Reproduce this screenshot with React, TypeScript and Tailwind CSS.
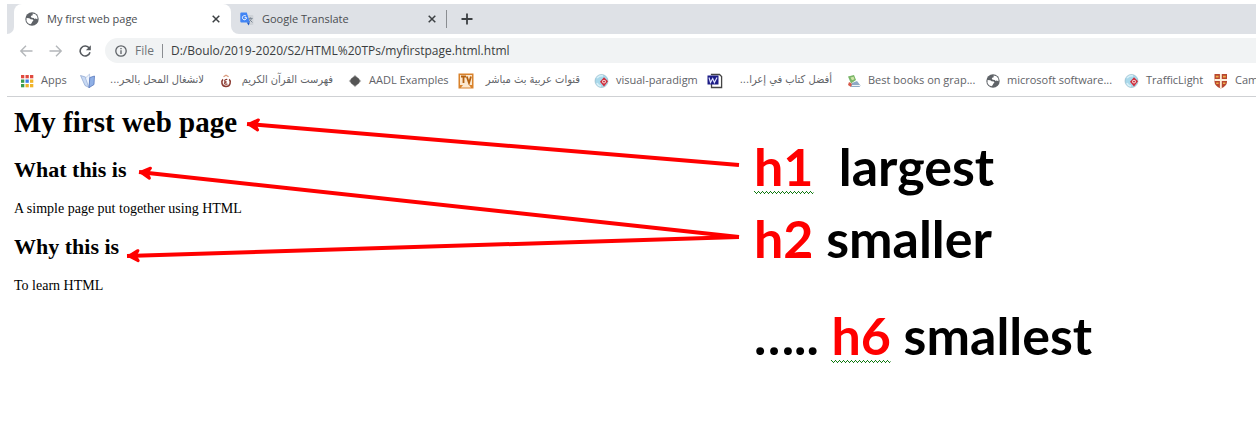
import type { ReactNode } from "react";

const GREY = "#5f6368";

interface Bookmark {
  label: string;
  icon: ReactNode;
  className: string;
  rtl?: boolean;
}

function GlobeIcon() {
  return (
    <svg viewBox="0 0 14 14" className="size-3.5 shrink-0" aria-hidden="true">
      <circle cx="7" cy="7" r="6.7" fill={GREY} />
      <path
        d="M1.6 6.1 4.3 6.2 5.6 7.3 7.8 7.5 8.4 8.8 7.2 9.7 6.6 11.3 5.4 12.3 3 11.2 1.5 9z"
        fill="#fff"
      />
      <path
        d="M7.6 1.5 10.4 2.3 12.3 4.6 12.5 7.2 10.6 6.6 9.4 7 8.8 5.9 6.7 5.7 5.8 4.7 6.2 3.7 7.7 3.3z"
        fill="#fff"
      />
    </svg>
  );
}

function TranslateIcon() {
  return (
    <svg viewBox="0 0 14 14" className="size-3.5 shrink-0" aria-hidden="true">
      <path d="M6 3h6.4q1 0 1 1v8q0 1-1 1H9z" fill="#cfd3d8" />
      <path
        d="M8.5 6.4h4M10.4 5.4v1M9 10l3-3.6M9.4 7.4l3 3"
        stroke="#7c8794"
        fill="none"
      />
      <path d="M1.3.6h5.5l3 9.9H1.3q-1 0-1-1v-8q0-.9 1-.9z" fill="#4285f4" />
      <path d="M6.8 10.5h3L8.6 13.4z" fill="#1a56c4" />
      <path
        d="M6 4.2A2.1 2.1 0 1 0 6.6 5.7H4.6"
        stroke="#fff"
        strokeWidth="1"
        fill="none"
      />
    </svg>
  );
}

function AppsIcon() {
  const colors = [
    "#e04a3f", "#e04a3f", "#e04a3f",
    "#3b9b4f", "#3f7fe8", "#f0b429",
    "#3b9b4f", "#f0b429", "#f0b429",
  ];
  return (
    <svg viewBox="0 0 16 16" className="size-4" aria-hidden="true">
      {colors.map((color, i) => (
        <rect
          key={i}
          x={2 + (i % 3) * 4.5}
          y={2 + Math.floor(i / 3) * 4.5}
          width="3.3"
          height="3.3"
          fill={color}
        />
      ))}
    </svg>
  );
}

function BookIcon() {
  return (
    <svg viewBox="0 0 16 16" className="size-4" aria-hidden="true">
      <path d="M.5 2.5 5.5 4 9 14.5 5 12.5z" fill="#c9daf4" stroke="#8ba3cf" strokeWidth=".7" />
      <path d="M5.5 5 9.6 1 9.5 10 9 14.5z" fill="#eef4fd" stroke="#9db3da" strokeWidth=".6" />
      <path d="M9.8 4.5 14.5 3 14 11.5 9 14.7z" fill="#8fb0e6" stroke="#4c6db4" strokeWidth=".7" />
    </svg>
  );
}

function QuranIcon() {
  return (
    <svg viewBox="0 0 16 16" className="size-4" fill="none" aria-hidden="true">
      <path d="M5 6.4C3.2 8 3.2 13.4 8 13.6c4.8 0 5-5.6 3.2-7.2" stroke="#8c3b32" strokeWidth="1.5" />
      <path d="M9.3 6.5Q6.6 6.2 6.7 8q.1 1 2 .8-2.4.4-2.2 1.6.4 1.2 3 .6" stroke="#8c3b32" strokeWidth="1.2" />
      <path d="M5.5 3.7 8 2.2l2.6 1.5" stroke="#d99a7c" strokeWidth="1.2" />
    </svg>
  );
}

function DiamondIcon() {
  return (
    <svg viewBox="0 0 16 16" className="size-4" aria-hidden="true">
      <path d="M8 1.8 14.3 8 8 14.2 1.7 8z" fill="#b5b5b5" />
      <path d="M8 3 11.5 5.5 13 8 11.5 10.5 8 13 4.5 10.5 3 8 4.5 5.5z" fill="#555" />
    </svg>
  );
}

function TvIcon() {
  return (
    <svg viewBox="0 0 16 16" className="size-4" aria-hidden="true">
      <rect x=".5" y=".5" width="15" height="15" fill="#d9822b" />
      <rect x="2" y="2" width="12" height="10" fill="#fbe8cf" />
      <path d="M3 3.5h5M5.5 3.5V10M8.8 3.5 11 10l2-6.5" stroke="#b4600f" strokeWidth="1.8" fill="none" />
      <path d="M3 14.5 5 12h6l2 2.5z" fill="#fbe8cf" />
    </svg>
  );
}

function ParadigmIcon() {
  return (
    <svg viewBox="0 0 16 16" className="size-4" aria-hidden="true">
      <circle cx="7.5" cy="8" r="6.5" fill="#a9d8ea" stroke="#8fb4c4" strokeWidth=".6" />
      <path d="M3 5q3-3 6-2M3 10q1 3 4 3" stroke="#d8f0f8" strokeWidth="1.5" fill="none" />
      <path d="m10 4.3 4 4-4 5.2-4-4.7z" fill="#cf2b3a" />
      <circle cx="10" cy="8.6" r="1.9" fill="#fbdcdc" />
      <circle cx="10" cy="8.6" r=".9" fill="#b81d2c" />
    </svg>
  );
}

function WordIcon() {
  return (
    <svg viewBox="0 0 16 16" className="size-4" aria-hidden="true">
      <path d="M4 1.5h8.5l2.5 2.5v11H4z" fill="#fff" />
      <path d="M4.5 2V1.5H12.5L14.6 3.5V14.5H4.5V11" stroke="#444" strokeWidth="1.3" fill="none" />
      <rect x=".5" y="2.5" width="11" height="9" fill="#1c1c86" />
      <path d="m2 4.5 1.5 5L5.7 5.5l1.7 4L10 4.5" stroke="#dfe2ff" strokeWidth="1.2" fill="none" />
    </svg>
  );
}

function BooksIcon() {
  return (
    <svg viewBox="0 0 16 16" className="size-4" aria-hidden="true">
      <path d="M2 3.5 8 2l2 5-5 3.5z" fill="#79b568" />
      <path d="m4.5 4.5 3-.8 1 2.5-2.5 1z" fill="#cfe6a6" />
      <path d="m3 9 4 2.5L5 14 2 12z" fill="#d65a4a" />
      <path d="m6 10 5-2 3.5 4.5-1 1.5H5z" fill="#8ea9c4" />
      <path d="M6 12.5h8" stroke="#eef3f7" />
    </svg>
  );
}

function ShieldIcon() {
  return (
    <svg viewBox="0 0 16 16" className="size-4" aria-hidden="true">
      <path d="M1.5 1h12.5v7.5Q14 13 7.8 15.5 1.5 13 1.5 8.5z" fill="#b8472f" />
      <path d="M6.9 1h1.9v5H14v1.9H8.8v7.2l-1 .4-.9-.4V7.9H1.5V6h5.4z" fill="#fdf1dc" />
      <path d="M2.8 3.6h2.8M10 3.6h2.8M3.2 10.3h2.4M10 10.3h2.4" stroke="#eeb04a" strokeWidth="1.6" />
    </svg>
  );
}

const bookmarks: Bookmark[] = [
  { label: "Apps", icon: <AppsIcon />, className: "w-[61px]" },
  { label: "لانشغال المحل بالحر...", icon: <BookIcon />, className: "w-[138px]", rtl: true },
  { label: "فهرست القرآن الكريم", icon: <QuranIcon />, className: "w-[129px]", rtl: true },
  { label: "AADL Examples", icon: <DiamondIcon />, className: "w-[111px]" },
  { label: "قنوات عربية بث مباشر", icon: <TvIcon />, className: "w-[136px]", rtl: true },
  { label: "visual-paradigm", icon: <ParadigmIcon />, className: "w-[113px]" },
  { label: "أفضل كتاب في إعرا...", icon: <WordIcon />, className: "w-[139px]", rtl: true },
  { label: "Best books on grap...", icon: <BooksIcon />, className: "w-[139px]" },
  { label: "microsoft software...", icon: <GlobeIcon />, className: "w-[139px]" },
  { label: "TrafficLight", icon: <ParadigmIcon />, className: "w-[89px]" },
  { label: "Cam", icon: <ShieldIcon />, className: "w-[44px]" },
];

function CloseButton({ label }: { label: string }) {
  return (
    <button type="button" aria-label={label} className="flex size-4 items-center justify-center">
      <svg viewBox="0 0 8 8" className="size-2" aria-hidden="true">
        <path d="M.7.7l6.6 6.6M7.3.7.7 7.3" stroke="#3c4043" strokeWidth="1.5" />
      </svg>
    </button>
  );
}

function TabStrip() {
  return (
    <div className="flex h-[30px] bg-[#dee1e6] text-[11px] text-[#4a4d51]">
      <div className="w-[7px] bg-white">
        <div className="h-full rounded-br-lg bg-[#dee1e6]" />
      </div>
      <div className="flex w-[217px] items-center rounded-t-lg bg-white pl-[11px] pr-[7px]">
        <GlobeIcon />
        <span className="ml-2 flex-1">My first web page</span>
        <CloseButton label="Close My first web page" />
      </div>
      <div className="bg-white">
        <div className="flex h-full w-[215px] items-center rounded-bl-lg bg-[#dee1e6] pl-[9px] pr-[6px]">
          <TranslateIcon />
          <span className="ml-2 flex-1">Google Translate</span>
          <CloseButton label="Close Google Translate" />
        </div>
      </div>
      <div className="flex items-center gap-3.5">
        <span className="h-[18px] w-px bg-[#8a8d91]" />
        <button type="button" aria-label="New tab">
          <svg viewBox="0 0 12 12" className="size-3" aria-hidden="true">
            <path d="M6 .5v11M.5 6h11" stroke="#3c4043" strokeWidth="1.8" />
          </svg>
        </button>
      </div>
    </div>
  );
}

function Toolbar() {
  return (
    <div className="flex h-[33px] items-center pl-3">
      <div className="flex w-[86px] shrink-0 items-center gap-4">
        <button type="button" aria-label="Back">
          <svg viewBox="0 0 14 12" className="h-3 w-3.5" fill="none" stroke="#b4b7ba" strokeWidth="1.4" aria-hidden="true">
            <path d="M13.5 6H2M7 .8 1.8 6 7 11.2" />
          </svg>
        </button>
        <button type="button" aria-label="Forward">
          <svg viewBox="0 0 14 12" className="h-3 w-3.5" fill="none" stroke="#b4b7ba" strokeWidth="1.4" aria-hidden="true">
            <path d="M.5 6H12M7 .8 12.2 6 7 11.2" />
          </svg>
        </button>
        <button type="button" aria-label="Reload">
          <svg viewBox="0 0 12 12" className="size-3" aria-hidden="true">
            <path d="M10.3 3.2A5 5 0 1 0 11 7.3" stroke="#55595e" strokeWidth="1.6" fill="none" />
            <path d="M11.8.3V5.2H6.9z" fill="#55595e" />
          </svg>
        </button>
      </div>
      <div className="flex h-[25px] flex-1 items-center rounded-l-full bg-[#f1f3f4] pl-2.5 text-xs">
        <svg viewBox="0 0 12 12" className="size-3 shrink-0" aria-hidden="true">
          <circle cx="6" cy="6" r="5.2" stroke={GREY} strokeWidth="1.3" fill="none" />
          <path d="M6 5.2v3.8M6 2.9v1.3" stroke={GREY} strokeWidth="1.3" />
        </svg>
        <span className="ml-2 text-[#6f7377]">File</span>
        <span className="mx-2 h-3.5 w-px bg-[#8a8d91]" />
        <input
          type="text"
          aria-label="Address"
          defaultValue="D:/Boulo/2019-2020/S2/HTML%20TPs/myfirstpage.html.html"
          className="min-w-0 flex-1 bg-transparent text-[#3a3d40] outline-none"
        />
      </div>
    </div>
  );
}

function BookmarksBar() {
  return (
    <nav
      aria-label="Bookmarks"
      className="flex h-[30px] items-center overflow-hidden border-b border-[#cfd1d4] pb-0.5 pl-3 text-[11px] text-[#5f6368]"
    >
      {bookmarks.map((bookmark) => (
        <a
          key={bookmark.label}
          href="#"
          className={`flex shrink-0 items-center gap-1.5 whitespace-nowrap ${bookmark.className}`}
        >
          <span className="flex size-4 shrink-0 items-center justify-center">{bookmark.icon}</span>
          {bookmark.rtl ? (
            <span dir="rtl" className="flex-1 pr-3.5 font-['DejaVu_Sans_Condensed','DejaVu_Sans',sans-serif]">
              {bookmark.label}
            </span>
          ) : (
            <span>{bookmark.label}</span>
          )}
        </a>
      ))}
    </nav>
  );
}

function Arrows() {
  return (
    <svg
      viewBox="0 0 733 200"
      className="absolute top-0 left-0 h-[200px] w-[733px]"
      fill="none"
      stroke="#ff0000"
      strokeWidth="4"
      aria-hidden="true"
    >
      <defs>
        <marker
          id="arrowHead"
          viewBox="0 0 16 16"
          refX="1"
          refY="8"
          markerWidth="16"
          markerHeight="16"
          markerUnits="userSpaceOnUse"
          orient="auto"
        >
          <path d="M12 3 3 8l9 5L9 8z" stroke="#ff0000" strokeWidth="3" strokeLinecap="round" strokeLinejoin="round" fill="#ff0000" />
        </marker>
      </defs>
      <path d="M240 27 732 68" markerStart="url(#arrowHead)" />
      <path d="M132 75 732 140" markerStart="url(#arrowHead)" />
      <path d="M120 159 732 140" markerStart="url(#arrowHead)" />
    </svg>
  );
}

function Tag({ children, checked }: { children: string; checked?: boolean }) {
  return (
    <span className="relative text-[#ff0000]">
      {children}
      {checked ? (
        <svg className="absolute bottom-[3px] left-0 h-[3px] w-full" aria-hidden="true">
          <defs>
            <pattern id={`wave-${children}`} width="4" height="3" patternUnits="userSpaceOnUse">
              <path d="M0 0h1v1H0zM1 1h1v1H1zM2 2h1v1H2zM3 1h1v1H3z" fill="#0f7a0f" />
            </pattern>
          </defs>
          <rect width="100%" height="3" fill={`url(#wave-${children})`} />
        </svg>
      ) : null}
    </span>
  );
}

export default function App() {
  return (
    <div className="min-h-screen overflow-hidden bg-white pt-1 pl-[7px] font-['Open_Sans','DejaVu_Sans',sans-serif]">
      <TabStrip />
      <Toolbar />
      <BookmarksBar />
      <main className="flex">
        <section className="relative w-[733px] shrink-0 pl-[7px] font-['Liberation_Serif',serif] text-black">
          <h1 className="mt-[9px] text-[29px] leading-8 font-bold">My first web page</h1>
          <h2 className="mt-5 text-[22px] leading-6 font-bold">What this is</h2>
          <p className="mt-[17px] text-sm">A simple page put together using HTML</p>
          <h2 className="mt-4 text-[22px] leading-6 font-bold">Why this is</h2>
          <p className="mt-[17px] text-sm">To learn HTML</p>
          <Arrows />
        </section>
        <section className="pt-[33px] pl-3.5 font-['Lato',sans-serif] text-[52px] leading-[72px] font-bold whitespace-pre text-black">
          <p>
            <Tag checked>h1</Tag>
            {"  largest"}
          </p>
          <p>
            <Tag>h2</Tag> smaller
          </p>
          <p className="mt-[25px]">
            ….. <Tag checked>h6</Tag> smallest
          </p>
        </section>
      </main>
    </div>
  );
}
